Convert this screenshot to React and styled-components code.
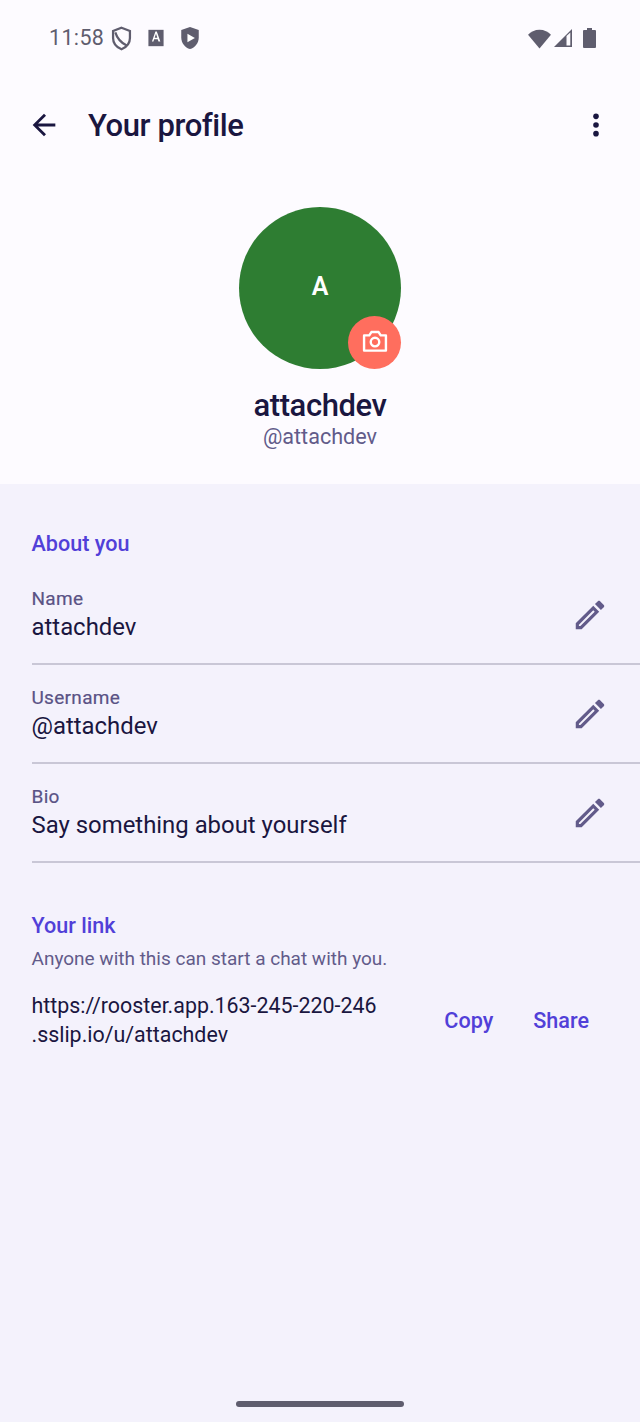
import React from "react";
import styled, { createGlobalStyle } from "styled-components";

const Global = createGlobalStyle`
  html, body { margin: 0; padding: 0; background: #f4f2fc; }
  body { font-family: Roboto, "Noto Sans", sans-serif; }
`;
const Screen = styled.div`
  width: 640px; height: 1422px; display: flex; flex-direction: column; overflow: hidden; position: relative;
  background: #f4f2fc;
`;
const Top = styled.header`
  height: 484px; flex: none; background: #fdfbff; display: flex; flex-direction: column; box-sizing: border-box;
`;
const StatusBar = styled.div`
  height: 76px; flex: none; display: flex; align-items: center; justify-content: space-between;
  padding: 0 44px 0 49px; color: #5f5d6e;
`;
const StatusGroup = styled.div`
  display: flex; align-items: center;
`;
const Clock = styled.span`
  font-size: 21.4px; letter-spacing: 0.4px; line-height: 1; color: #5f5d6e; margin-right: 4px;
`;
const AppBar = styled.div`
  height: 98px; flex: none; display: flex; align-items: center; padding: 0 28px 0 27px;
`;
const BackButton = styled.div`
  width: 34px; height: 34px; display: flex; margin-right: 27px;
`;
const Title = styled.h1`
  flex: 1; margin: 0; font-size: 31px; font-weight: 500; letter-spacing: -0.4px; color: #1a1640;
`;
const Profile = styled.div`
  display: flex; flex-direction: column; align-items: center; padding-top: 33px;
`;
const Avatar = styled.div`
  width: 162px; height: 162px; border-radius: 50%; background: #2e7d32; color: #fff; position: relative;
  display: flex; align-items: center; justify-content: center; font-size: 25px; font-weight: 600; line-height: 28px;
`;
const AvatarInitial = styled.span`
  margin-top: -2px;
`;
const CameraBadge = styled.div`
  position: absolute; right: 0; bottom: 0; width: 53px; height: 53px; border-radius: 50%;
  background: #ff6e5e; display: flex; align-items: center; justify-content: center;
`;
const DisplayName = styled.div`
  margin-top: 19px; font-size: 31px; line-height: 36px; font-weight: 500; letter-spacing: -0.4px; color: #1a1640;
`;
const Handle = styled.div`
  margin-top: -1px; font-size: 21.6px; line-height: 28px; color: #625b8a;
`;
const Body = styled.main`
  flex: 1; display: flex; flex-direction: column; padding-top: 46px;
`;
const SectionTitle = styled.h2`
  margin: 0; padding-left: 31.5px; font-size: 21.6px; line-height: 28px; font-weight: 500; color: #5140d8;
`;
const RowList = styled.div`
  margin-top: 8px; display: flex; flex-direction: column;
`;
const Row = styled.div`
  height: 99px; box-sizing: border-box; margin-left: 31.5px; border-bottom: 2px solid #c9c7d6;
  display: flex; align-items: center; justify-content: space-between; padding: 0 31px 0 0;
`;
const RowText = styled.div`
  display: flex; flex-direction: column;
`;
const RowLabel = styled.div`
  font-size: 19px; line-height: 24px; font-weight: 400; letter-spacing: 0.3px; color: #5a5385;
  -webkit-text-stroke: 0.2px #5a5385;
`;
const RowValue = styled.div`
  font-size: 23.9px; line-height: 32px; color: #1a1640;
`;
const LinkSection = styled.section`
  margin-top: 49px; display: flex; flex-direction: column;
`;
const Hint = styled.div`
  margin: 5px 0 0 31.5px; font-size: 19px; line-height: 28px; color: #625b8a;
`;
const LinkRow = styled.div`
  display: flex; align-items: center; margin: 18px 0 0 31.5px; padding-right: 51px;
`;
const LinkText = styled.div`
  flex: 1; font-size: 21.4px; line-height: 29px; color: #1a1640;
`;
const LinkAction = styled.button`
  border: 0; background: none; padding: 0; margin-left: 40px; font: 500 21.6px Roboto, sans-serif; color: #5140d8;
`;
const HomeBar = styled.div`
  position: absolute; left: 236px; bottom: 15px; width: 168px; height: 6px; border-radius: 3px; background: #5f5d6e;
`;

const Pencil = () => (
  <svg width="38" height="38" viewBox="0 0 24 24" fill="#625b8a">
    <path d="M14.06 9.020l.92.92L5.920 19H5v-.92l9.060-9.060M17.660 3c-.25 0-.51.1-.7.29l-1.830 1.830 3.750 3.750 1.830-1.830c.39-.39.39-1.020 0-1.410l-2.340-2.340c-.2-.2-.45-.29-.71-.29zm-3.600 3.190L3 17.250V21h3.750L17.810 9.940l-3.750-3.750z" />
  </svg>
);

const EditRow = ({ label, value }) => (
  <Row>
    <RowText>
      <RowLabel>{label}</RowLabel>
      <RowValue>{value}</RowValue>
    </RowText>
    <Pencil />
  </Row>
);

export default function App() {
  return (
    <Screen>
      <Global />
      <Top>
        <StatusBar>
          <StatusGroup>
            <Clock>11:58</Clock>
            <svg width="27" height="27" viewBox="0 0 24 24" fill="none" stroke="#5f5d6e" strokeWidth="2">
              <path d="M12 2.500l7.500 2.800v6.200c0 4.800-3 8.200-7.500 10-4.500-1.800-7.500-5.200-7.500-10V5.300z" />
              <path d="M6.500 6.500c1.500 5 5.500 9.500 10.500 12" />
            </svg>
            <svg style={{ marginLeft: 7 }} width="28" height="28" viewBox="0 0 24 24">
              <rect x="5.500" y="5" width="13" height="14" fill="#5f5d6e" />
              <path d="M8.500 15l3-8.500h1.200l3 8.500h-1.600l-.6-1.900h-3.100l-.6 1.900zm2.400-3.200h2.200l-1.100-3.400z" fill="#fff" />
            </svg>
            <svg style={{ marginLeft: 6 }} width="28" height="28" viewBox="0 0 24 24">
              <path d="M12 2.500l7.500 2.700v6.300c0 4.800-3.200 8.500-7.500 10-4.300-1.500-7.500-5.200-7.500-10V5.200z" fill="#5f5d6e" />
              <path d="M9.800 8.300l6.400 3.700-6.400 3.700z" fill="#fff" />
            </svg>
          </StatusGroup>
          <StatusGroup>
            <svg width="25" height="25" viewBox="0 0 24 24" fill="#5f5d6e" style={{ marginRight: 1 }}>
              <path d="M12 21.500L1 8.500C3.500 5.500 7.500 3.500 12 3.500s8.500 2 11 5z" />
            </svg>
            <svg width="20" height="20" viewBox="0 0 20 20" style={{ marginRight: 10 }}>
              <path d="M1 19L19 1v18z" fill="#5f5d6e" />
              <path d="M13.500 8v9.500h3.800V4.500z" fill="#fdfbff" />
            </svg>
            <svg width="13" height="20" viewBox="0 0 13 20" fill="#5f5d6e">
              <path d="M4 0h5v2h3a1 1 0 0 1 1 1v16a1 1 0 0 1-1 1H1a1 1 0 0 1-1-1V3a1 1 0 0 1 1-1h3z" />
            </svg>
          </StatusGroup>
        </StatusBar>
        <AppBar>
          <BackButton>
            <svg width="34" height="34" viewBox="0 0 24 24" fill="#1a1640">
              <path d="M20 11H7.830l5.590-5.590L12 4l-8 8 8 8 1.410-1.410L7.830 13H20z" />
            </svg>
          </BackButton>
          <Title>Your profile</Title>
          <svg width="32" height="32" viewBox="0 0 24 24" fill="#1a1640">
            <circle cx="12" cy="5.500" r="2.100" />
            <circle cx="12" cy="12" r="2.100" />
            <circle cx="12" cy="18.500" r="2.100" />
          </svg>
        </AppBar>
        <Profile>
          <Avatar>
            <AvatarInitial>A</AvatarInitial>
            <CameraBadge>
              <svg width="32" height="32" viewBox="0 0 24 24" fill="none" stroke="#fff" strokeWidth="1.800" style={{ marginTop: -4 }}>
                <path d="M3.800 7.800h3.900l1.600-2.500h5.400l1.600 2.500h3.900v11.400H3.800z" strokeLinejoin="round" />
                <circle cx="12" cy="12.800" r="3.200" />
              </svg>
            </CameraBadge>
          </Avatar>
          <DisplayName>attachdev</DisplayName>
          <Handle>@attachdev</Handle>
        </Profile>
      </Top>
      <Body>
        <SectionTitle>About you</SectionTitle>
        <RowList>
          <EditRow label="Name" value="attachdev" />
          <EditRow label="Username" value="@attachdev" />
          <EditRow label="Bio" value="Say something about yourself" />
        </RowList>
        <LinkSection>
          <SectionTitle>Your link</SectionTitle>
          <Hint>Anyone with this can start a chat with you.</Hint>
          <LinkRow>
            <LinkText>https://rooster.app.163-245-220-246<br />.sslip.io/u/attachdev</LinkText>
            <LinkAction>Copy</LinkAction>
            <LinkAction>Share</LinkAction>
          </LinkRow>
        </LinkSection>
      </Body>
      <HomeBar />
    </Screen>
  );
}
